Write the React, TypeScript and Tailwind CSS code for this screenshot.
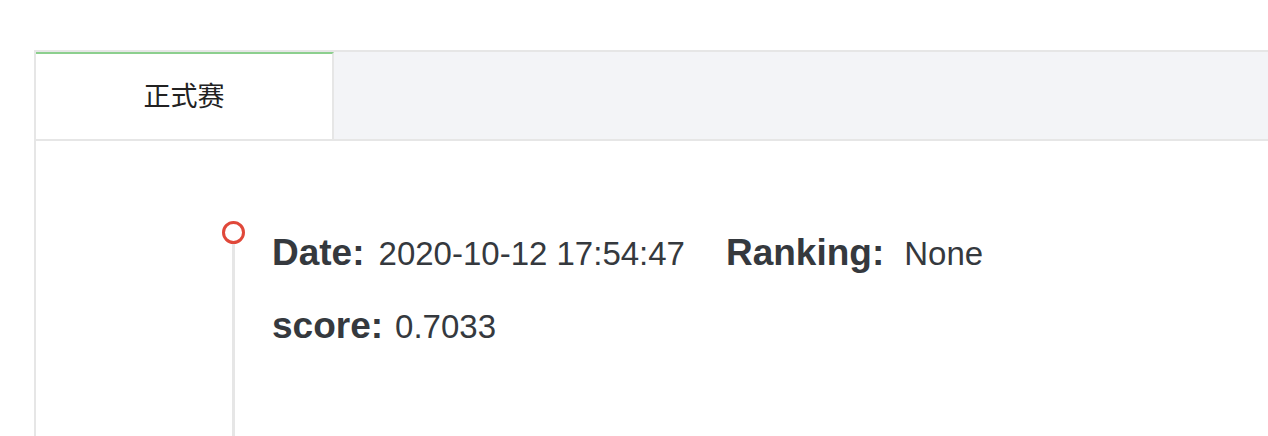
import React from "react"

const rows = [
  [
    { label: "Date:", value: "2020-10-12 17:54:47", gap: "ml-[14px]" },
    { label: "Ranking:", value: "None", gap: "ml-[20px]" },
  ],
  [{ label: "score:", value: "0.7033", gap: "ml-[12px]" }],
]

export default function App() {
  return (
    <div className="h-[436px] w-full overflow-hidden bg-white pt-[50px] pl-[34px] font-['Liberation_Sans',Arial,sans-serif]">
      <div className="flex h-[386px] flex-col border-l-2 border-t-2 border-[#e6e6e6]">
        {/* Tabs */}
        <div className="flex h-[89px] shrink-0 bg-[#f3f4f7] border-b-2 border-[#e6e6e6]">
          <div className="flex w-[298px] items-center justify-center border-t-2 border-r-2 border-t-[#8ccf8e] border-r-[#e6e6e6] bg-white pb-[2px] text-[27px] text-[#222] font-['Noto_Sans_CJK_SC',sans-serif]">
            正式赛
          </div>
        </div>

        {/* Timeline */}
        <div className="flex flex-1 pl-[186px] pt-[80px]">
          <div className="flex w-[23px] flex-col items-center">
            <div className="h-[23px] w-[23px] rounded-full border-[3px] border-[#e0483a] bg-white" />
            <div className="w-[3px] flex-1 bg-[#e6e6e6]" />
          </div>
          <div className="ml-[27px] -mt-[4px] flex flex-col text-[#35393e]">
            {rows.map((row, i) => (
              <div key={i} className="flex items-baseline leading-[72px]">
                {row.map((item, j) => (
                  <div key={item.label} className={`flex items-baseline ${j > 0 ? "ml-[41px]" : ""}`}>
                    <span className="text-[37px] font-bold">{item.label}</span>
                    <span className={`text-[33px] ${item.gap}`}>{item.value}</span>
                  </div>
                ))}
              </div>
            ))}
          </div>
        </div>
      </div>
    </div>
  )
}
